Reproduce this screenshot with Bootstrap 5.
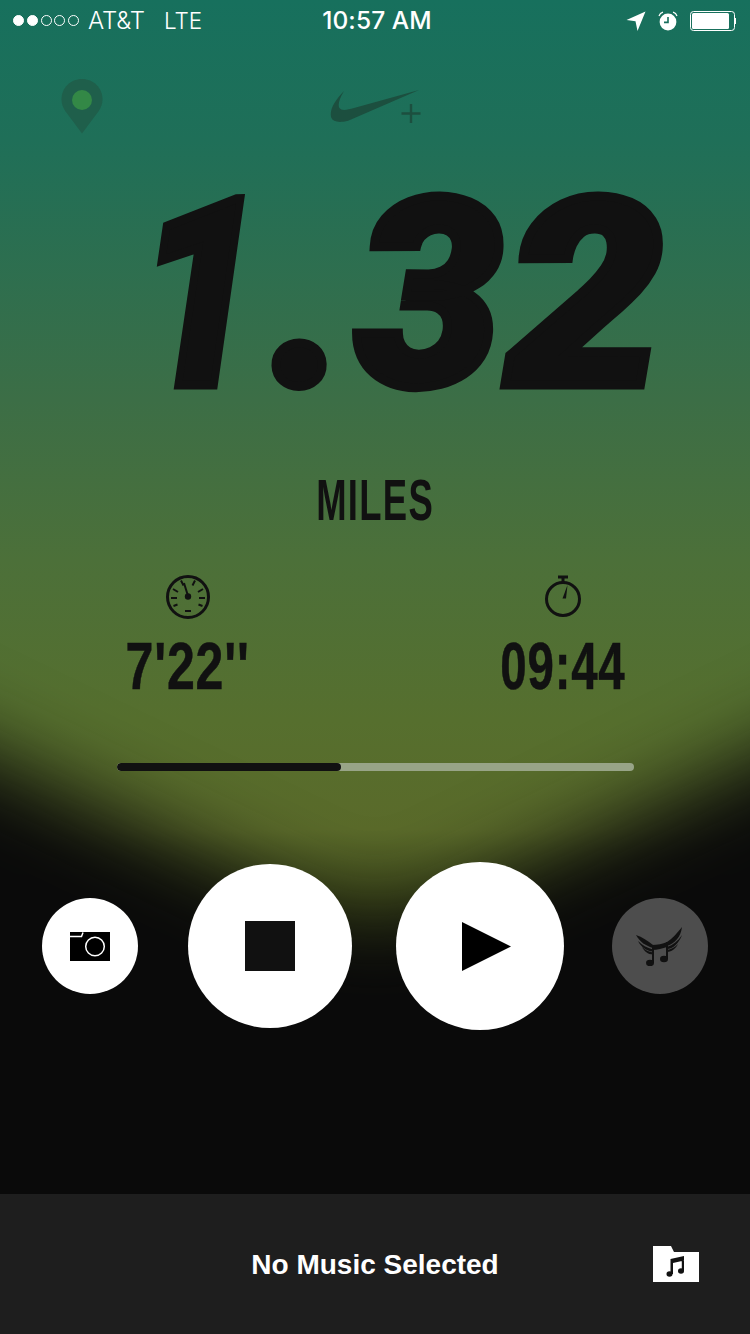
<!DOCTYPE html>
<html lang="en">
<head>
  <meta charset="UTF-8" />
  <meta name="viewport" content="width=device-width, initial-scale=1" />
  <title>Run</title>
  <link href="https://cdn.jsdelivr.net/npm/bootstrap@5.3.0/dist/css/bootstrap.min.css" rel="stylesheet" />
  <style>
    html, body { height: 1334px; overflow: hidden; background: #0a0a0a; }
    .run-screen { position: relative; width: 750px; height: 1334px; overflow: hidden;
      background: linear-gradient(180deg, #17705d 0, #1f6f58 140px, #3c6e46 400px, #4c7039 560px, #566f2e 720px, #5a6a2a 830px, #3f4a1b 900px, #0a0a0a 1030px); }
    .run-shade { position: absolute; left: 0; top: 0; pointer-events: none; }
    .run-flow { position: relative; height: 100%; }

    .status-row { height: 41px; padding: 0 14px 0 13px; color: #fff; font-family: "Inter", "Liberation Sans", sans-serif; }
    .status-side { flex: 1 1 0; }
    .status-text { font-size: 24px; font-weight: 300; letter-spacing: -.1px; line-height: 41px; }
    .status-carrier { margin-left: 6px; }
    .status-net { margin-left: 19px; font-size: 22.5px; }
    .status-time { margin-left: 5px; font-size: 24.5px; font-weight: 500; line-height: 41px; letter-spacing: .1px; }
    .sig-dot { width: 11px; height: 11px; border-radius: 50%; border: 1px solid #fff; margin-right: 2.8px; }
    .sig-on { background: #fff; }
    .battery { width: 46px; height: 20px; }

    .top-icons { height: 96px; padding-left: 61px; }
    .pin-icon { margin-top: 38px; }
    .swoosh-slot { margin-left: 227px; margin-top: 49px; line-height: 0; }

    .big-figure { height: 284px; margin-top: 17px; padding-left: 137px; font-family: "Roboto", "Liberation Sans", sans-serif; font-weight: 900; font-style: italic;
      color: #111; font-size: 262px; line-height: 284px; -webkit-text-stroke: 9px #111; white-space: nowrap; }
    .fig-char { display: inline-block; transform-origin: left bottom; }
    .fig-one { margin-right: -13px; transform: scaleX(.85); }
    .fig-dot { margin-right: 7px; }
    .fig-three { margin-right: 4px; }
    .fig-two { transform: scaleX(1.07); }
    .dist-unit { height: 102px; margin-top: 34px; color: #111; }
    .cond-text { display: inline-block; font-family: "Liberation Sans", sans-serif; font-weight: 700; color: #111; }
    .unit-text { font-size: 57px; line-height: 57px; letter-spacing: 2px; transform: scaleX(.64); }
    .stat-num { line-height: 70px; }
    .stat-text { font-size: 66px; letter-spacing: 1px; -webkit-text-stroke: .5px #111; }
    .pace-text { transform: scaleX(.76); }
    .time-text { transform: scaleX(.72); }
    .stat-icon { height: 57px; }

    .run-progress { width: 517px; height: 8px; margin: 45px 0 0 117px; border-radius: 4px; background: #98a487; }
    .run-progress .progress-bar { background: #111; border-radius: 4px; }

    .ctrl-row { padding-left: 42px; margin-top: 91px; height: 168px; }
    .ctrl-btn { padding: 0; border: 0; border-radius: 50%; background: #fff; flex: none; }
    .ctrl-sm { width: 96px; height: 96px; }
    .ctrl-stop { width: 164px; height: 164px; margin-left: 50px; }
    .ctrl-play { width: 168px; height: 168px; margin-left: 44px; }
    .play-icon { margin-left: 12px; }
    .ctrl-music { margin-left: 48px; background: #4d4d4d; }
    .stop-mark { width: 50px; height: 50px; background: #111; }

    .music-foot { position: absolute; left: 0; right: 0; bottom: 0; height: 140px; background: #1e1e1e; color: #fff; padding-right: 51px;
      font-family: "Liberation Sans", sans-serif; font-weight: 700; font-size: 28px; }
    .foot-title { position: absolute; left: 0; right: 0; top: 0; line-height: 142px; }
  </style>
</head>
<body>
  <div class="run-screen">
    <!-- dark falloff over the gradient, V shaped around the buttons -->
    <svg class="run-shade" width="750" height="1334" viewBox="0 0 750 1334">
      <defs><filter id="shadeBlur" x="-20%" y="-20%" width="140%" height="140%" color-interpolation-filters="sRGB"><feGaussianBlur stdDeviation="42"/></filter></defs>
      <path fill="#0a0a0a" filter="url(#shadeBlur)" d="M-300 616 300 905Q375 950 450 905L1050 616V1400H-300z"/>
    </svg>
    <div class="run-flow d-flex flex-column">

      <div class="status-row d-flex align-items-center">
        <div class="status-side d-flex align-items-center">
          <span class="sig-dot sig-on"></span><span class="sig-dot sig-on"></span><span class="sig-dot"></span><span class="sig-dot"></span><span class="sig-dot"></span>
          <span class="status-text status-carrier">AT&amp;T</span>
          <span class="status-text status-net">LTE</span>
        </div>
        <div class="status-time">10:57 AM</div>
        <div class="status-side d-flex align-items-center justify-content-end gap-2">
          <svg width="20" height="20" viewBox="0 0 20 20"><path fill="#fff" d="M19.500 .5 .5 9l9 1.200L11.500 20z"/></svg>
          <svg class="mx-1" width="20" height="20" viewBox="0 0 20 20">
            <circle cx="10" cy="11" r="8.4" fill="#fff"/>
            <path d="M10 6v5.4H6" fill="none" stroke="#176e5c" stroke-width="1.6"/>
            <path d="M1 5c.6-2 2-3.300 4-3.800M19 5c-.6-2-2-3.300-4-3.800" fill="none" stroke="#fff" stroke-width="1.2"/>
          </svg>
          <svg class="battery" viewBox="0 0 46 20">
            <rect x=".5" y=".5" width="44" height="19" rx="3" fill="none" stroke="#fff"/>
            <rect x="2" y="2" width="37" height="16" rx="1.500" fill="#fff"/>
            <rect x="44.500" y="7" width="1.500" height="6" fill="#fff"/>
          </svg>
        </div>
      </div>

      <div class="top-icons d-flex align-items-start">
        <svg class="pin-icon" width="42" height="55" viewBox="0 0 42 55">
          <path fill="#1f5f4b" d="M21 0C9.400 0 .5 8.900.5 20.500c0 4.600 1.500 8.300 3.900 11.800L21 54.500l16.600-22.200c2.400-3.500 3.900-7.200 3.900-11.800C41.500 8.900 32.600 0 21 0z"/>
          <circle cx="21" cy="21" r="10" fill="#338846"/>
        </svg>
        <div class="swoosh-slot">
          <svg width="92" height="36" viewBox="0 0 92 36">
            <path fill="#1c4f3f" d="M14 1C5 10-1 20 1.200 27.500c1.600 4.500 8 5.500 17 3.200L89 0 24 18c-7 2-12.500 3-14.600 0C7.700 15.500 9 9 14 1z"/>
            <path fill="none" stroke="#1c4f3f" stroke-width="2.400" d="M81 14v19M71.500 23.500h19"/>
          </svg>
        </div>
      </div>

      <div class="big-figure"><span class="fig-char fig-one">1</span><span class="fig-char fig-dot">.</span><span class="fig-char fig-three">3</span><span class="fig-char fig-two">2</span></div>
      <div class="dist-unit text-center"><span class="cond-text unit-text">MILES</span></div>

      <div class="row g-0 text-center">
        <div class="col-6">
          <div class="stat-icon">
            <svg width="46" height="46" viewBox="0 0 46 46" fill="none" stroke="#111">
              <circle cx="23" cy="23" r="20.500" stroke-width="3"/>
              <path stroke-width="2" d="M6 24h6M8 15l5 3M16 6.500l2.500 5M30 6.500l-2.500 5M38 15l-5 3M40 24h-6M8.500 32l4-1.500M37.500 32l-4-1.500M20 37h6"/>
              <path stroke-width="2" d="M19 9l4 13"/>
              <circle cx="23" cy="22.500" r="3.200" fill="#111" stroke="none"/>
            </svg>
          </div>
          <div class="stat-num"><span class="cond-text stat-text pace-text">7'22''</span></div>
        </div>
        <div class="col-6">
          <div class="stat-icon">
            <svg width="38" height="46" viewBox="0 0 38 46" fill="none" stroke="#111">
              <circle cx="19" cy="25" r="16.500" stroke-width="3"/>
              <path stroke-width="3" d="M14 3h10"/>
              <path stroke-width="3" d="M19 4v5"/>
              <path fill="#111" stroke="none" d="M23.500 11 22 24.500h-3.500z"/>
            </svg>
          </div>
          <div class="stat-num"><span class="cond-text stat-text time-text">09:44</span></div>
        </div>
      </div>

      <div class="progress run-progress">
        <div class="progress-bar" style="width: 43.3%"></div>
      </div>

      <div class="ctrl-row d-flex align-items-center">
        <button type="button" class="ctrl-btn ctrl-sm d-flex align-items-center justify-content-center">
          <svg width="40" height="29" viewBox="0 0 40 29">
            <rect width="40" height="29" fill="#000"/>
            <path d="M0 4.500h11.500L13 .5" fill="none" stroke="#fff" stroke-width="1.500"/>
            <circle cx="25" cy="14.500" r="9.300" fill="none" stroke="#fff" stroke-width="1.500"/>
          </svg>
        </button>
        <button type="button" class="ctrl-btn ctrl-stop d-flex align-items-center justify-content-center"><span class="stop-mark"></span></button>
        <button type="button" class="ctrl-btn ctrl-play d-flex align-items-center justify-content-center">
          <svg class="play-icon" width="49" height="49" viewBox="0 0 49 49"><path fill="#000" d="M0 0l49 24.500L0 49z"/></svg>
        </button>
        <button type="button" class="ctrl-btn ctrl-sm ctrl-music d-flex align-items-center justify-content-center">
          <svg width="48" height="40" viewBox="0 0 48 40" fill="#111">
            <path d="M0 9C6 11 12 15 17 19v3C10 20 4 16 0 9z"/>
            <path d="M2 15c4 4 9 7 15 8.500v2C10 25 5 21 2 15z"/>
            <path d="M6 21c3 3 7 5 11 5.500v2C12 28.500 8 25 6 21z"/>
            <path d="M46 1C41 7 36 13 31 16v4C38 18 45 11 46 1z"/>
            <path d="M46 9C42 15 37 19 31 21v2C37 23 43 17 46 9z"/>
            <path d="M42 18c-3 3-7 5.500-11 6v2c5 0 9-4 11-8z"/>
            <path d="M16 19c5 0 11-1 15-3v5c-4 1.500-10 3-15 3z"/>
            <path d="M16 19h2v18h-2zM30 16h2v17h-2z"/>
            <ellipse cx="14" cy="37" rx="4" ry="3.200"/><ellipse cx="28" cy="33" rx="4" ry="3.200"/>
          </svg>
        </button>
      </div>

      <div class="music-foot d-flex align-items-center justify-content-end">
        <div class="foot-title text-center">No Music Selected</div>
        <svg class="position-relative" width="46" height="36" viewBox="0 0 46 36">
          <path fill="#fff" d="M0 0h18l3 6h25v30H0z"/>
          <path fill="#111" d="M17.500 13 31 10v4.500l-11 2.500V28h-2.500zM28.800 11h2.200v14h-2.200z"/>
          <ellipse cx="16.500" cy="28" rx="3" ry="2.800" fill="#111"/><ellipse cx="28" cy="25" rx="3" ry="2.800" fill="#111"/>
        </svg>
      </div>
    </div>
  </div>
  <script src="https://cdn.jsdelivr.net/npm/bootstrap@5.3.0/dist/js/bootstrap.bundle.min.js"></script>
</body>
</html>
